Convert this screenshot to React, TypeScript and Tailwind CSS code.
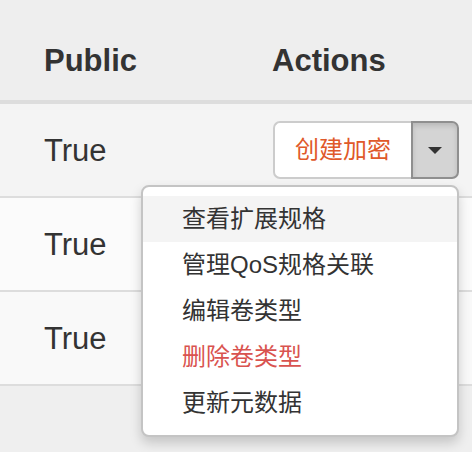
import React from "react";

const font = { fontFamily: '"Liberation Sans", "Noto Sans CJK SC", sans-serif' };

function SplitButton({ open }: { open?: boolean }) {
  return (
    <div className="relative flex h-[58px] w-[186px]">
      <button className="flex h-full w-[138px] items-center justify-center rounded-l-[7px] border-2 border-r-0 border-[#cccccc] bg-white text-[24px] text-[#e0592a]">
        {open ? "创建加密" : ""}
      </button>
      {open ? (
        <div className="flex h-full w-[48px] items-center justify-center rounded-r-[7px] border-2 border-[#8f8f8f] bg-[#d4d4d4] shadow-[inset_0_3px_5px_rgba(0,0,0,0.125)]">
          <span className="block h-0 w-0 border-l-[7px] border-r-[7px] border-t-[7px] border-l-transparent border-r-transparent border-t-[#333333]" />
        </div>
      ) : (
        <div className="flex h-full w-[48px] items-center justify-center rounded-r-[7px] border-2 border-[#bbbbbb] bg-white">
          <span className="block h-0 w-0 border-l-[7px] border-r-[7px] border-t-[7px] border-l-transparent border-r-transparent border-t-[#333333]" />
        </div>
      )}
      {open && (
        <div className="absolute right-0 top-[64px] z-10 w-[318px] rounded-[8px] border-2 border-[#c4c4c4] bg-white py-[9px] shadow-[0_6px_12px_rgba(0,0,0,0.175)]">
          <div className="flex h-[46px] items-center bg-[#f4f4f4] pl-[39px] text-[24px] text-[#333333]">查看扩展规格</div>
          <div className="flex h-[46px] items-center pl-[39px] text-[24px] text-[#333333]">管理QoS规格关联</div>
          <div className="flex h-[46px] items-center pl-[39px] text-[24px] text-[#333333]">编辑卷类型</div>
          <div className="flex h-[46px] items-center pl-[39px] text-[24px] text-[#d9534f]">删除卷类型</div>
          <div className="flex h-[46px] items-center pl-[39px] text-[24px] text-[#333333]">更新元数据</div>
        </div>
      )}
    </div>
  );
}

function Row({ bg, open }: { bg: string; open?: boolean }) {
  return (
    <div className={`flex h-[94px] items-center border-b-2 border-[#dddddd] ${bg}`}>
      <div className="w-[273px] pl-[44px] text-[31px] leading-[31px] text-[#333333]">True</div>
      <div className="flex-1">
        <SplitButton open={open} />
      </div>
    </div>
  );
}

export default function App() {
  return (
    <div className="min-h-[452px] w-[472px] overflow-hidden bg-[#efefef]" style={font}>
      <div className="flex h-[104px] border-b-4 border-[#dddddd] bg-[#eeeeee]">
        <div className="w-[272px] pl-[44px] pt-[45px] text-[31px] font-bold leading-[31px] text-[#333333]">Public</div>
        <div className="flex-1 pt-[45px] text-[31px] font-bold leading-[31px] text-[#333333]">Actions</div>
      </div>
      <Row bg="bg-[#f4f4f4]" open />
      <Row bg="bg-[#fbfbfb]" />
      <Row bg="bg-[#f9f9f9]" />
    </div>
  );
}
